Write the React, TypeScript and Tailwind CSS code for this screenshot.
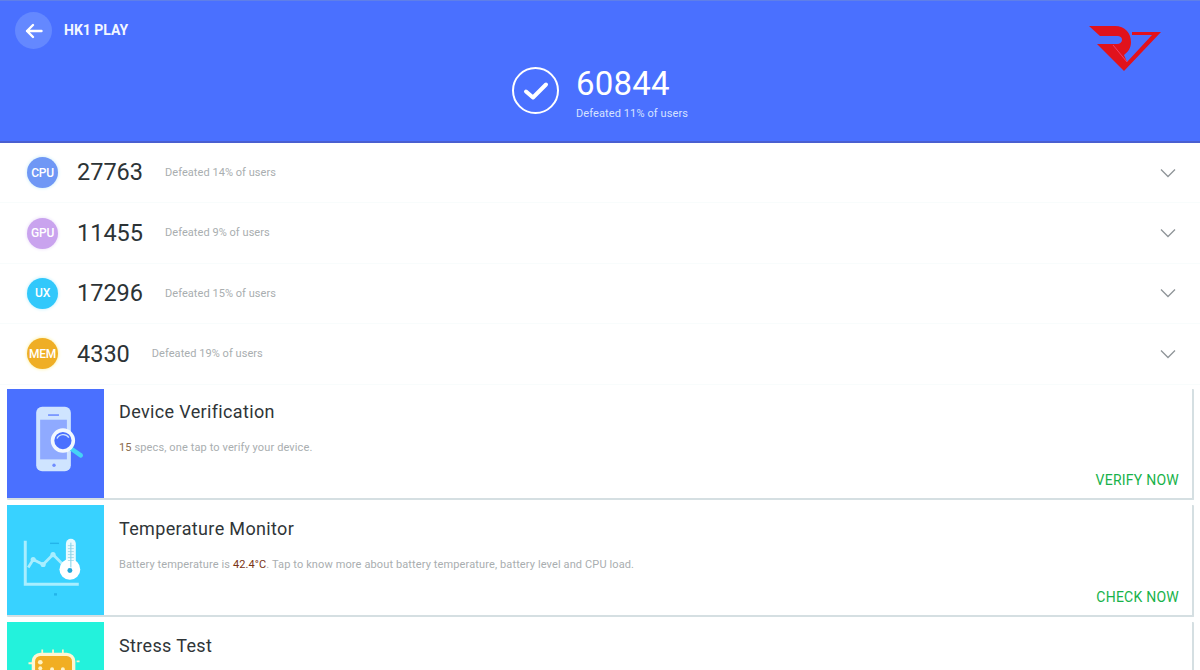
const font = { fontFamily: "Roboto, 'Liberation Sans', sans-serif" };

function Chevron() {
  return (
    <svg width="16" height="10" viewBox="0 0 16 10" fill="none" stroke="#8f9599" strokeWidth="1.3" className="shrink-0">
      <path d="M1 1.5 L8 8.5 L15 1.5" />
    </svg>
  );
}

function ScoreRow({ label, color, glow, score, text }: { label: string; color: string; glow: string; score: string; text: string }) {
  return (
    <div className="h-[60.4px] flex items-center pl-[27px] pr-[24px] border-b border-[#f8fcfc]">
      <div className={`w-[31px] h-[31px] rounded-full flex items-center justify-center shrink-0 text-white font-medium text-[12px] tracking-[-0.2px] ${color} ${glow}`}>{label}</div>
      <div className="ml-[19px] pt-[1px] text-[23.5px] leading-none text-[#2c3336]">{score}</div>
      <div className="ml-[22px] pt-[1px] text-[11px] tracking-[0.05px] text-[#a9aeb0]">{text}</div>
      <div className="ml-auto"><Chevron /></div>
    </div>
  );
}

function PhoneIcon() {
  return (
    <svg className="w-[97px] h-full" viewBox="7 389 97 110">
      <rect x="36" y="407" width="35" height="65" rx="6" fill="#cfe4ff" />
      <rect x="40" y="420" width="27" height="40" fill="#8faaff" />
      <rect x="48" y="414.5" width="11" height="1.6" fill="#6f8dff" />
      <circle cx="54" cy="466" r="1.7" fill="#6f8dff" />
      <path d="M71 449 L81 456" stroke="#45d3f5" strokeWidth="4.5" strokeLinecap="round" />
      <circle cx="63" cy="441" r="10.5" fill="#4a70ff" stroke="#f2f8ff" strokeWidth="3.6" />
      <path d="M57 439 a7 7 0 0 1 12 -1" fill="none" stroke="#cfe4ff" strokeWidth="1.4" />
    </svg>
  );
}

function TempIcon() {
  return (
    <svg className="w-[97px] h-full" viewBox="7 505 97 111">
      <path d="M25 541 V585 H79" fill="none" stroke="#a8eeff" strokeWidth="3" />
      <path d="M28 568 L33 560 L43 565 L53 555 L62 564" fill="none" stroke="#a8eeff" strokeWidth="2.8" />
      <circle cx="33" cy="560" r="2.6" fill="#a8eeff" />
      <circle cx="43" cy="565" r="2.6" fill="#a8eeff" />
      <circle cx="53" cy="555" r="2.6" fill="#a8eeff" />
      <rect x="50" y="543" width="9" height="1.4" fill="#24b4ea" />
      <rect x="54" y="594" width="3" height="2.4" fill="#24b4ea" />
      <rect x="66" y="539" width="10" height="32" rx="5" fill="#e8faff" />
      <circle cx="70" cy="570" r="10.5" fill="#ffffff" />
      <path d="M71 543 V568" stroke="#7ccfe8" strokeWidth="1" />
      <path d="M68 546 H74 M68 549 H74 M68 552 H74 M68 555 H74 M68 558 H74 M68 561 H74" stroke="#8fd0e4" strokeWidth="0.7" />
      <circle cx="70" cy="571" r="2.5" fill="#24a6d8" />
    </svg>
  );
}

function ChipIcon() {
  return (
    <svg className="w-[97px] h-full" viewBox="7 622 97 111">
      <path d="M42 650 V655 M53 650 V655 M63 650 V655 M77 662 H80 M28 664 H32" stroke="#fdf3c9" strokeWidth="1.8" />
      <rect x="33" y="655" width="41" height="36" rx="7" fill="#f1ae23" stroke="#fff6d2" strokeWidth="3.4" />
      <circle cx="40" cy="663" r="2.4" fill="#fff3c4" />
      <circle cx="40" cy="669" r="2" fill="#fff3c4" />
      <circle cx="52" cy="670" r="2" fill="#fff3c4" />
      <circle cx="63" cy="670" r="2" fill="#fff3c4" />
    </svg>
  );
}

function Card({ bg, title, icon, children, action, h, titlePad }: { bg: string; title: string; icon: React.ReactNode; children?: React.ReactNode; action?: string; h: string; titlePad: string }) {
  return (
    <div className={`${h} mb-[5px] flex bg-white border-r-2 border-b-2 border-[#d5dfe2] shrink-0 rounded-[1px]`}>
      <div className={`w-[97px] shrink-0 overflow-hidden ${bg}`}>{icon}</div>
      <div className="flex-1 pl-[15px] pr-[13px] relative">
        <div className={`${titlePad} text-[18px] leading-[24px] tracking-[0.35px] text-[#2f3538]`}>{title}</div>
        {children && <div className="mt-[17px] text-[11px] leading-[14px] tracking-[0.12px] text-[#a9aeb0]">{children}</div>}
        {action && <div className="absolute right-[13px] bottom-[10px] text-[14px] leading-[16px] tracking-[0.25px] text-[#17b24a]">{action}</div>}
      </div>
    </div>
  );
}

export default function App() {
  return (
    <div style={font} className="w-[1200px] h-[670px] overflow-hidden bg-white flex flex-col">
      <header className="h-[143px] shrink-0 bg-[#4a70ff] border-t border-[#5f7fe8] border-b-2 border-b-[#4a5fd0] relative flex flex-col">
        <div className="flex items-center pl-[15px] pt-[11px]">
          <div className="w-[37px] h-[37px] rounded-full bg-[#6488ff] flex items-center justify-center">
            <svg width="18" height="16" viewBox="0 0 18 16" fill="none" stroke="#ffffff" strokeWidth="2.4" strokeLinecap="round" strokeLinejoin="round">
              <path d="M16.5 8 H2 M8 2 L2 8 L8 14" />
            </svg>
          </div>
          <div className="ml-[12px] text-[14px] font-bold text-[#f2f6ff]">HK1 PLAY</div>
        </div>
        <div className="flex justify-center items-center mt-[11.5px]">
          <div className="w-[47px] h-[47px] rounded-full border-2 border-white flex items-center justify-center">
            <svg width="26" height="20" viewBox="0 0 26 20" fill="none" stroke="#ffffff" strokeWidth="4" strokeLinecap="round" strokeLinejoin="round">
              <path d="M3 10.5 L10 16.5 L23 3.5" />
            </svg>
          </div>
          <div className="ml-[17px] pt-[4px] flex flex-col">
            <div className="text-[33px] leading-[38px] tracking-[0.2px] text-white">60844</div>
            <div className="text-[11px] leading-[14px] mt-[4px] tracking-[0.1px] text-[#d6e2ff]">Defeated 11% of users</div>
          </div>
        </div>
        <svg className="absolute left-[1089px] top-[25px]" width="74" height="47" viewBox="0 0 74 47">
          <path d="M0 0 H26 C36 0 42 7 42 16 C42 22 39 26 35 29 L38 36 L63 9 H43 L43 6 H72 L35 45 L8 18 H28 C31 18 33 16 33 14 C33 11 31 10 28 10 H11 Z" fill="#e1121c" />
          <path d="M24 19 L38 36" stroke="#f0406a" strokeWidth="1" />
        </svg>
      </header>
      <div className="h-[246px] shrink-0 flex flex-col">
        <ScoreRow label="CPU" color="bg-[#6f97f5]" glow="shadow-[0_0_3px_1px_#dcf3fb]" score="27763" text="Defeated 14% of users" />
        <ScoreRow label="GPU" color="bg-[#c9a3ee]" glow="shadow-[0_0_3px_1px_#f1e8fb]" score="11455" text="Defeated 9% of users" />
        <ScoreRow label="UX" color="bg-[#31c8fb]" glow="shadow-[0_0_3px_1px_#d5f5ff]" score="17296" text="Defeated 15% of users" />
        <ScoreRow label="MEM" color="bg-[#efae25]" glow="shadow-[0_0_3px_1px_#fdf5bf]" score="4330" text="Defeated 19% of users" />
      </div>
      <div className="pl-[7px] pr-[6px] flex flex-col flex-1 min-h-0">
        <Card h="h-[111px]" titlePad="pt-[11px]" bg="bg-[#4a70ff]" title="Device Verification" icon={<PhoneIcon />} action="VERIFY NOW">
          <span className="text-[#8a6a4a]">15</span> specs, one tap to verify your device.
        </Card>
        <Card h="h-[112px]" titlePad="pt-[12px]" bg="bg-[#38d2ff]" title="Temperature Monitor" icon={<TempIcon />} action="CHECK NOW">
          Battery temperature is <span className="text-[#7a3414]">42.4°C</span>. Tap to know more about battery temperature, battery level and CPU load.
        </Card>
        <Card h="h-[111px]" titlePad="pt-[12px]" bg="bg-[#23f2dc]" title="Stress Test" icon={<ChipIcon />} />
      </div>
    </div>
  );
}
